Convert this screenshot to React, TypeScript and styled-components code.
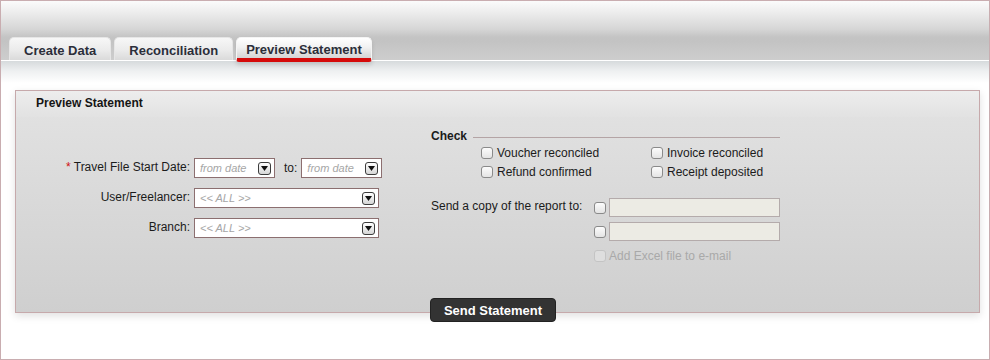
import React from 'react'
import styled, { createGlobalStyle } from 'styled-components'

const GlobalStyle = createGlobalStyle`
  html, body {
    margin: 0;
    padding: 0;
    background: #ffffff;
  }
  body {
    font-family: "Liberation Sans", Arial, sans-serif;
    font-size: 12px;
    color: #1b1b1b;
  }
`

const Frame = styled.div`
  box-sizing: border-box;
  width: 990px;
  height: 360px;
  border: 1px solid #c9adb0;
  background: #ffffff;
  overflow: hidden;
`

const TopBar = styled.div`
  height: 59px;
  display: flex;
  align-items: flex-end;
  gap: 3px;
  padding-left: 8px;
  background: linear-gradient(
    to bottom,
    #fbfbfb 0px,
    #ececec 12px,
    #d6d6d6 28px,
    #c4c4c4 36px,
    #c3c3c3 40px,
    #cdcdcd 58px
  );
`

const Tab = styled.div<{ active?: boolean }>`
  position: relative;
  z-index: ${({ active }) => (active ? 1 : 0)};
  box-sizing: border-box;
  height: ${({ active }) => (active ? '25px' : '23px')};
  margin-bottom: ${({ active }) => (active ? '-2px' : '0')};
  padding: ${({ active }) => (active ? '4px 9px 0' : '5px 14px 0')};
  border: 1px solid ${({ active }) => (active ? '#f4f4f4' : '#e6e6e6')};
  border-bottom: ${({ active }) => (active ? '4px solid #d50a0a' : 'none')};
  border-radius: ${({ active }) => (active ? '5px 5px 3px 3px' : '5px 5px 0 0')};
  background: ${({ active }) =>
    active
      ? 'linear-gradient(to bottom, #ffffff 0%, #f2f2f2 45%, #d4d4d4 100%)'
      : 'linear-gradient(to bottom, #f7f7f7 0%, #ebebeb 55%, #dadada 100%)'};
  box-shadow: ${({ active }) => (active ? '0 3px 4px rgba(0, 0, 0, 0.12)' : 'none')};
  font-size: 13px;
  font-weight: bold;
  line-height: 16px;
  color: #2b2e3a;
  white-space: nowrap;
`

const Content = styled.div`
  border-top: 1px solid #ffffff;
  padding: 29px 9px 0 14px;
  background: linear-gradient(to bottom, #d6dadc 0px, #eef0f1 10px, #ffffff 22px);
`

const Panel = styled.div`
  border: 1px solid #c6a9ab;
  background: linear-gradient(to bottom, #e3e3e3 0%, #cfcfcf 100%);
  box-shadow: 0 3px 8px rgba(0, 0, 0, 0.12);
`

const PanelHeader = styled.div`
  height: 26px;
  padding-left: 20px;
  line-height: 24px;
  font-size: 12px;
  font-weight: bold;
  color: #151515;
  background: linear-gradient(to bottom, #ededed 0%, #e2e2e2 100%);
`

const PanelBody = styled.div`
  height: 195px;
  display: grid;
  grid-template-columns: 415px 1fr;
`

const LeftForm = styled.div`
  padding-top: 41px;
  display: grid;
  grid-template-columns: 174px auto;
  grid-auto-rows: 20px;
  column-gap: 4px;
  row-gap: 10px;
  align-content: start;
`

const Label = styled.label`
  text-align: right;
  line-height: 18px;
  white-space: nowrap;
  color: #1b1b1b;
`

const Req = styled.span`
  color: #d01010;
`

const FieldRow = styled.div`
  display: flex;
  align-items: center;
`

const ToLabel = styled.span`
  margin: 0 4px 0 9px;
  line-height: 18px;
`

const Select = styled.div<{ width: number }>`
  box-sizing: border-box;
  width: ${({ width }) => width}px;
  height: 20px;
  border: 1px solid #8c6f70;
  background: #ffffff;
  display: flex;
  align-items: center;
  justify-content: space-between;
  padding: 0 3px 0 5px;
`

const Placeholder = styled.span`
  font-size: 11px;
  font-style: italic;
  color: #a6a6a6;
`

const ArrowBtn = styled.span`
  box-sizing: border-box;
  width: 13px;
  height: 13px;
  border: 1px solid #3c3c3c;
  border-radius: 3px;
  background: linear-gradient(to bottom, #ffffff 0%, #d6d6d6 100%);
  display: flex;
  align-items: center;
  justify-content: center;
`

const RightForm = styled.div`
  padding-top: 12px;
`

const CheckHead = styled.div`
  width: 349px;
  height: 14px;
  display: flex;
  align-items: center;
  gap: 6px;
`

const CheckTitle = styled.span`
  font-weight: bold;
  font-size: 12px;
  line-height: 14px;
`

const Rule = styled.span`
  flex: 1;
  height: 1px;
  margin-top: 3px;
  background: #b4a4a5;
`

const CheckGrid = styled.div`
  margin-left: 50px;
  display: grid;
  grid-template-columns: 170px 170px;
  grid-auto-rows: 19px;
`

const CheckItem = styled.label<{ disabled?: boolean }>`
  display: flex;
  align-items: center;
  gap: 4px;
  white-space: nowrap;
  color: ${({ disabled }) => (disabled ? '#a9a9a9' : '#1b1b1b')};
`

const Box = styled.input.attrs({ type: 'checkbox' })`
  appearance: none;
  margin: 0;
  width: 12px;
  height: 12px;
  box-sizing: border-box;
  border: 1px solid ${({ disabled }) => (disabled ? '#c4c4c4' : '#8a8a8a')};
  border-radius: 3px;
  background: ${({ disabled }) =>
    disabled ? '#dedede' : 'linear-gradient(to bottom, #fcfcfc 0%, #e4e4e4 100%)'};
`

const CopyGrid = styled.div`
  margin-top: 17px;
  display: grid;
  grid-template-columns: 163px 15px 171px;
  grid-auto-rows: 19px;
  row-gap: 5px;
  align-items: center;
`

const CopyLabel = styled.span`
  align-self: start;
  line-height: 14px;
  padding-top: 1px;
  white-space: nowrap;
`

const EmailInput = styled.input`
  box-sizing: border-box;
  width: 171px;
  height: 19px;
  margin: 0;
  border: 1px solid #b4abab;
  background: #ecebe4;
`

const ButtonRow = styled.div`
  display: flex;
  justify-content: center;
  margin-top: -15px;
  padding-right: 9px;
`

const SendButton = styled.button`
  position: relative;
  box-sizing: border-box;
  width: 126px;
  height: 24px;
  border: 1px solid #222222;
  border-radius: 4px;
  background: #333333;
  color: #ffffff;
  font-family: "Liberation Sans", Arial, sans-serif;
  font-size: 13px;
  font-weight: bold;
  padding: 0;
`

const Arrow = () => (
  <ArrowBtn>
    <svg width="7" height="5" viewBox="0 0 7 5">
      <path d="M0 0 H7 L3.5 5 Z" fill="#111" />
    </svg>
  </ArrowBtn>
)

const DropDown: React.FC<{ width: number; text: string }> = ({ width, text }) => (
  <Select width={width}>
    <Placeholder>{text}</Placeholder>
    <Arrow />
  </Select>
)

const checks = [
  'Voucher reconciled',
  'Invoice reconciled',
  'Refund confirmed',
  'Receipt deposited',
]

export default function App() {
  return (
    <>
      <GlobalStyle />
      <Frame>
        <TopBar>
          <Tab>Create Data</Tab>
          <Tab>Reconciliation</Tab>
          <Tab active>Preview Statement</Tab>
        </TopBar>
        <Content>
          <Panel>
            <PanelHeader>Preview Statement</PanelHeader>
            <PanelBody>
              <LeftForm>
                <Label>
                  <Req>*</Req> Travel File Start Date:
                </Label>
                <FieldRow>
                  <DropDown width={81} text="from date" />
                  <ToLabel>to:</ToLabel>
                  <DropDown width={81} text="from date" />
                </FieldRow>
                <Label>User/Freelancer:</Label>
                <FieldRow>
                  <DropDown width={185} text="<< ALL >>" />
                </FieldRow>
                <Label>Branch:</Label>
                <FieldRow>
                  <DropDown width={185} text="<< ALL >>" />
                </FieldRow>
              </LeftForm>
              <RightForm>
                <CheckHead>
                  <CheckTitle>Check</CheckTitle>
                  <Rule />
                </CheckHead>
                <CheckGrid>
                  {checks.map((c) => (
                    <CheckItem key={c}>
                      <Box />
                      {c}
                    </CheckItem>
                  ))}
                </CheckGrid>
                <CopyGrid>
                  <CopyLabel>Send a copy of the report to:</CopyLabel>
                  <Box />
                  <EmailInput />
                  <span />
                  <Box />
                  <EmailInput />
                  <span />
                  <Box disabled />
                  <CheckItem disabled>Add Excel file to e-mail</CheckItem>
                </CopyGrid>
              </RightForm>
            </PanelBody>
          </Panel>
          <ButtonRow>
            <SendButton>Send Statement</SendButton>
          </ButtonRow>
        </Content>
      </Frame>
    </>
  )
}
